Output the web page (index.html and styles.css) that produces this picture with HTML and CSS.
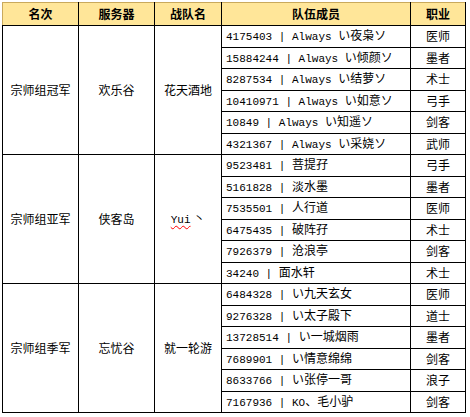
FILE: index.html
```html
<!DOCTYPE html>
<html lang="zh-CN">
<head>
<meta charset="utf-8">
<title>宗师组排名</title>
<link rel="stylesheet" href="styles.css">
</head>
<body>
<table class="rank-table">
  <colgroup>
    <col class="c-rank"><col class="c-server"><col class="c-team"><col class="c-member"><col class="c-job">
  </colgroup>
  <thead>
    <tr><th class="first">名次</th><th>服务器</th><th>战队名</th><th>队伍成员</th><th>职业</th></tr>
  </thead>
  <tbody>
    <tr><td rowspan="6">宗师组冠军</td><td rowspan="6">欢乐谷</td><td rowspan="6">花天酒地</td><td class="member"><span class="en">4175403 | Always </span>い夜枭ソ</td><td>医师</td></tr>
    <tr><td class="member"><span class="en">15884244 | Always </span>い倾颜ソ</td><td>墨者</td></tr>
    <tr><td class="member"><span class="en">8287534 | Always </span>い结萝ソ</td><td>术士</td></tr>
    <tr><td class="member"><span class="en">10410971 | Always </span>い如意ソ</td><td>弓手</td></tr>
    <tr><td class="member"><span class="en">10849 | Always </span>い知遥ソ</td><td>剑客</td></tr>
    <tr><td class="member"><span class="en">4321367 | Always </span>い采娆ソ</td><td>武师</td></tr>

    <tr><td rowspan="6">宗师组亚军</td><td rowspan="6">侠客岛</td><td rowspan="6"><span class="en spell">Yui</span> 丶</td><td class="member"><span class="en">9523481 | </span>菩提孖</td><td>弓手</td></tr>
    <tr><td class="member"><span class="en">5161828 | </span>淡水墨</td><td>墨者</td></tr>
    <tr><td class="member"><span class="en">7535501 | </span>人行道</td><td>医师</td></tr>
    <tr><td class="member"><span class="en">6475435 | </span>破阵孖</td><td>术士</td></tr>
    <tr><td class="member"><span class="en">7926379 | </span>沧浪亭</td><td>剑客</td></tr>
    <tr><td class="member"><span class="en">34240 | </span>面水轩</td><td>术士</td></tr>

    <tr><td rowspan="6">宗师组季军</td><td rowspan="6">忘忧谷</td><td rowspan="6">就一轮游</td><td class="member"><span class="en">6484328 | </span>い九天玄女</td><td>医师</td></tr>
    <tr><td class="member"><span class="en">9276328 | </span>い太子殿下</td><td>道士</td></tr>
    <tr><td class="member"><span class="en">13728514 | </span>い一城烟雨</td><td>墨者</td></tr>
    <tr><td class="member"><span class="en">7689901 | </span>い情意绵绵</td><td>剑客</td></tr>
    <tr><td class="member"><span class="en">8633766 | </span>い张停一哥</td><td>浪子</td></tr>
    <tr><td class="member"><span class="en">7167936 | KO</span>、毛小驴</td><td>剑客</td></tr>
  </tbody>
</table>
</body>
</html>
```

FILE: styles.css
```css
html, body {
  margin: 0;
  padding: 0;
  background: #ffffff;
}

body {
  font-family: "Noto Sans CJK SC", "Noto Sans", sans-serif;
  font-size: 12px;
  color: #000000;
}

.rank-table {
  margin: 2px 0 0 2px;
  border-collapse: collapse;
  table-layout: fixed;
  width: 464px;
}

.c-rank { width: 76px; }
.c-server { width: 76px; }
.c-team { width: 67px; }
.c-member { width: 189px; }
.c-job { width: 55px; }

.rank-table th {
  height: 22px;
  padding: 0;
  background: #ffe699;
  font-weight: bold;
  font-size: 12px;
  line-height: 12px;
  text-align: center;
  vertical-align: middle;
  border: 1px solid #000000;
  border-top-color: #c9a95c;
}

.rank-table th.first {
  border-left-color: #c9a95c;
}

.rank-table td {
  height: 20.5px;
  padding: 0;
  line-height: 12px;
  text-align: center;
  vertical-align: middle;
  border: 1px solid #000000;
  white-space: nowrap;
}

.rank-table td.member {
  text-align: left;
  padding-left: 4px;
}

.en {
  font-family: "Liberation Mono", "DejaVu Sans Mono", monospace;
  font-size: 11px;
  line-height: 12px;
  white-space: pre;
}

.spell {
  text-decoration: underline wavy #ff0000;
  text-decoration-thickness: 1px;
  text-underline-offset: 2px;
}
```
